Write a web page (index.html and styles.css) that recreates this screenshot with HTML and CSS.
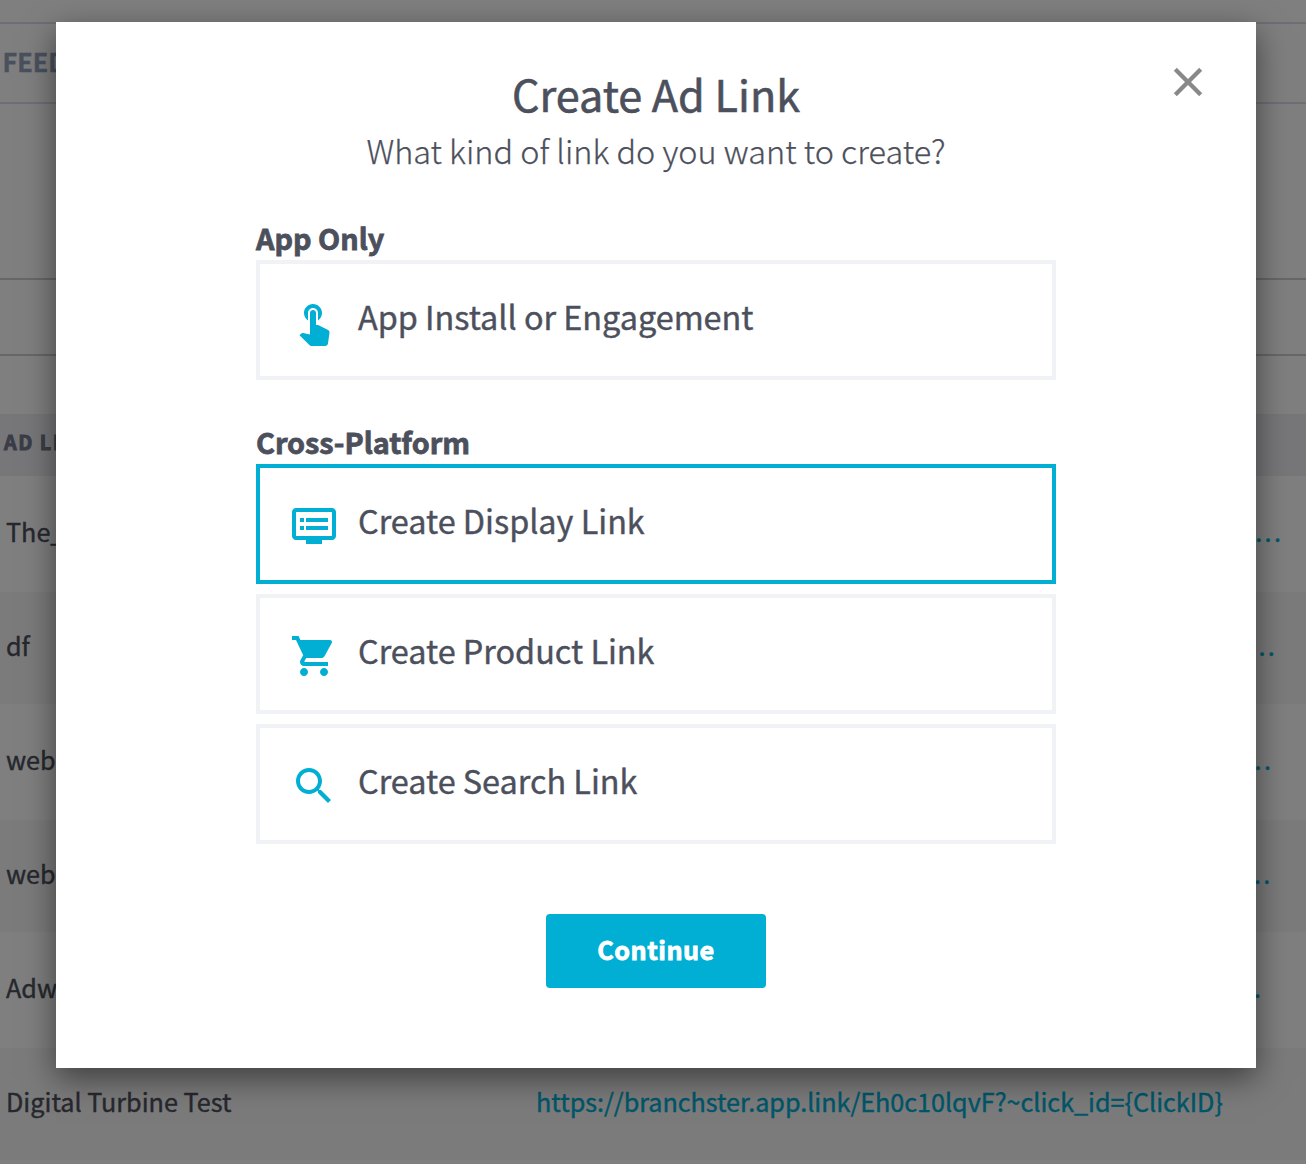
FILE: index.html
```html
<!DOCTYPE html>
<html lang="en">
<head>
<meta charset="utf-8">
<title>Create Ad Link</title>
<link rel="stylesheet" href="styles.css">
</head>
<body>
<main class="page">
  <nav class="tabs"><span class="tab">FEED</span></nav>
  <div class="filters"></div>
  <div class="table">
    <div class="table-head">AD LINK</div>
    <div class="row"><span class="name">The_</span><span class="link more" style="margin-left: 719.3px">...</span></div>
    <div class="row alt"><span class="name">df</span><span class="link more" style="margin-left: 713.2px">...</span></div>
    <div class="row"><span class="name">web</span><span class="link more" style="margin-left: 709.3px">...</span></div>
    <div class="row alt"><span class="name">web</span><span class="link more" style="margin-left: 708.6px">...</span></div>
    <div class="row"><span class="name">Adw</span><span class="link more" style="margin-left: 699.3px">...</span></div>
    <div class="row alt"><span class="name">Digital Turbine Test</span><span class="link">https://branchster.app.link/Eh0c10lqvF?~click_id={ClickID}</span></div>
  </div>
</main>
<div class="overlay">
  <section class="modal" role="dialog">
    <svg class="close" viewBox="0 0 24 24"><path d="M19 6.41L17.59 5 12 10.59 6.41 5 5 6.41 10.59 12 5 17.59 6.41 19 12 13.41 17.59 19 19 17.59 13.41 12z"/></svg>
    <h1 class="title">Create Ad Link</h1>
    <p class="subtitle">What kind of link do you want to create?</p>
    <div class="group">
      <h2 class="label">App Only</h2>
      <div class="option">
        <svg class="icon" viewBox="0 0 24 24"><path d="M9 11.24V7.5C9 6.12 10.12 5 11.5 5S14 6.12 14 7.5v3.74c1.21-.81 2-2.18 2-3.74C16 5.01 13.99 3 11.5 3S7 5.01 7 7.5c0 1.56.79 2.93 2 3.74zm9.84 4.63l-4.54-2.26c-.17-.07-.35-.11-.54-.11H13v-6c0-.83-.67-1.5-1.5-1.5S10 6.67 10 7.5v10.74l-3.43-.72c-.08-.01-.15-.03-.24-.03-.31 0-.59.13-.79.33l-.79.8 4.94 4.94c.27.27.65.44 1.06.44h6.79c.75 0 1.33-.55 1.44-1.28l.75-5.27c.01-.07.02-.14.02-.2 0-.62-.38-1.16-.91-1.38z"/></svg>
        <span class="text">App Install or Engagement</span>
      </div>
    </div>
    <div class="group">
      <h2 class="label">Cross-Platform</h2>
      <div class="option selected">
        <svg class="icon" viewBox="0 0 24 24"><path d="M21 3H3c-1.1 0-2 .9-2 2v12c0 1.1.9 2 2 2h5v2h8v-2h5c1.1 0 2-.9 2-2V5c0-1.1-.9-2-2-2zm0 14H3V5h18v12zm-2-9H8v2h11V8zm0 4H8v2h11v-2zM7 8H5v2h2V8zm0 4H5v2h2v-2z"/></svg>
        <span class="text">Create Display Link</span>
      </div>
      <div class="option">
        <svg class="icon" viewBox="0 0 24 24"><path d="M7 18c-1.1 0-1.99.9-1.99 2S5.9 22 7 22s2-.9 2-2-.9-2-2-2zM1 2v2h2l3.6 7.59-1.35 2.45c-.16.28-.25.61-.25.96 0 1.1.9 2 2 2h12v-2H7.42c-.14 0-.25-.11-.25-.25l.03-.12.9-1.63h7.45c.75 0 1.41-.41 1.75-1.03l3.58-6.49c.08-.14.12-.31.12-.48 0-.55-.45-1-1-1H5.21l-.94-2H1zm16 16c-1.1 0-1.99.9-1.99 2s.89 2 1.99 2 2-.9 2-2-.9-2-2-2z"/></svg>
        <span class="text">Create Product Link</span>
      </div>
      <div class="option">
        <svg class="icon" viewBox="0 0 24 24"><path d="M15.5 14h-.79l-.28-.27C15.41 12.59 16 11.11 16 9.5 16 5.91 13.09 3 9.5 3S3 5.91 3 9.5 5.91 16 9.5 16c1.61 0 3.09-.59 4.23-1.57l.27.28v.79l5 4.99L20.49 19l-4.99-5zm-6 0C7.01 14 5 11.99 5 9.5S7.01 5 9.5 5 14 7.01 14 9.5 11.99 14 9.5 14z"/></svg>
        <span class="text">Create Search Link</span>
      </div>
    </div>
    <button class="continue">Continue</button>
  </section>
</div>
</body>
</html>
```
FILE: styles.css
```css
* { box-sizing: border-box; }

body {
  margin: 0;
  position: relative;
  width: 1306px;
  height: 1164px;
  overflow: hidden;
  background: #fff;
  color: #4c505c;
  font-family: "Noto Sans CJK SC", "Noto Sans", sans-serif;
  font-size: 25.2px;
  -webkit-text-stroke: .4px currentColor;
}

/* Page behind the dialog */
.page { padding-top: 22px; }

.tabs {
  display: flex;
  align-items: center;
  height: 82px;
  padding: 0 0 4px 2.5px;
  border-top: 2px solid #d8e0ea;
  border-bottom: 2px solid #d8e0ea;
  color: #94a3ba;
  font-weight: 700;
}

.filters {
  height: 78px;
  margin: 174px 0 58px;
  border-top: 2px solid #cecece;
  border-bottom: 2px solid #cecece;
}

.table-head {
  display: flex;
  align-items: center;
  height: 62px;
  padding: 0 0 7px 4px;
  background: #eeeff4;
  color: #747a90;
  font-size: 19.8px;
  font-weight: 700;
  letter-spacing: 1.5px;
  -webkit-text-stroke-width: .9px;
}

.row {
  display: flex;
  align-items: center;
  height: 116px;
  padding: 0 0 6px 6px;
  white-space: nowrap;
}

.row.alt { height: 112px; background: #f7f7f7; }
.name { width: 530px; }
.link { color: #00add3; letter-spacing: -.03px; }
.more { letter-spacing: 2.3px; }

/* Dialog */
.overlay {
  position: absolute;
  inset: 0;
  padding: 22px 50px 0 56px;
  background: rgba(0, 0, 0, .5);
}

.modal {
  position: relative;
  display: flex;
  flex-direction: column;
  align-items: center;
  height: 1046px;
  padding-top: 41px;
  background: #fff;
  box-shadow: 0 10px 30px rgba(0, 0, 0, .5);
}

.close {
  position: absolute;
  top: 36px;
  right: 44px;
  width: 48px;
  height: 48px;
  fill: #888;
  stroke: #888;
  stroke-width: .2;
  stroke-linejoin: round;
}

.title {
  margin: 0;
  font-size: 43.2px;
  font-weight: 400;
  line-height: 60px;
  -webkit-text-stroke-width: .6px;
}

.subtitle {
  margin: 5px 0 4px;
  font-size: 32.4px;
  font-weight: 300;
  line-height: 44px;
  -webkit-text-stroke-width: .25px;
}

.group {
  display: flex;
  flex-direction: column;
  gap: 10px;
  width: 800px;
  margin-top: 44px;
}

.label {
  margin: 0 0 -5px;
  font-size: 28.8px;
  font-weight: 700;
  line-height: 35px;
  -webkit-text-stroke-width: .8px;
}

.option {
  display: flex;
  gap: 20px;
  height: 120px;
  padding: 34px 30px;
  border: 4px solid #f1f2f6;
}

.option.selected { border-color: #01aed4; }

.icon {
  width: 48px;
  height: 48px;
  fill: #01aed4;
}

.text {
  font-size: 32.4px;
  line-height: 36px;
  letter-spacing: -.02px;
}

.continue {
  width: 220px;
  height: 74px;
  margin-top: 70px;
  padding: 0 0 4px;
  border: 0;
  border-radius: 4px;
  background: #01aed4;
  color: #fff;
  font: inherit;
  font-weight: 700;
  letter-spacing: .5px;
  -webkit-text-stroke: .8px #fff;
}
```
